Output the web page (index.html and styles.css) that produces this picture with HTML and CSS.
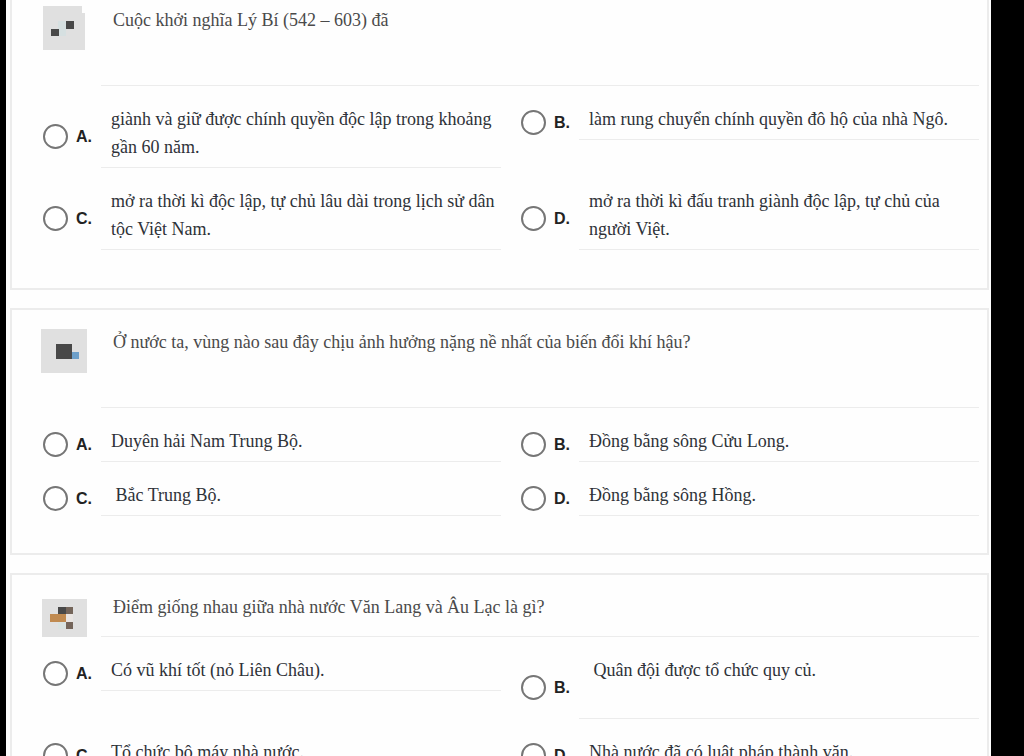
FILE: index.html
```html
<!DOCTYPE html>
<html lang="vi">

<head>
  <meta charset="UTF-8">
  <meta name="viewport" content="width=device-width, initial-scale=1.0">
  <title>Câu hỏi trắc nghiệm</title>
  <link rel="stylesheet" href="styles.css">
</head>

<body>
  <form class="quiz">
    <section class="card card-first">
      <div class="question">
        <div class="thumb">
          <svg width="42" height="44" viewBox="0 0 42 44" shape-rendering="crispEdges" aria-hidden="true">
            <path d="M0 0H39V7H42V44H0Z" fill="#e0e0e0"/>
            <path d="M15 23H23V30H15ZM15 15H23V23H15Z" fill="#d6e0e1"/>
            <path d="M8 23H16V30H8ZM23 15H31V23H23Z" fill="#484848"/>
          </svg>
        </div>
        <p class="question-text">Cuộc khởi nghĩa Lý Bí (542 – 603) đã</p>
      </div>
      <div class="answers">
        <label class="answer">
          <input type="radio" name="q1" value="A">
          <span class="letter">A.</span>
          <span class="answer-text">giành và giữ được chính quyền độc lập trong khoảng gần 60 năm.</span>
        </label>
        <label class="answer">
          <input type="radio" name="q1" value="B">
          <span class="letter">B.</span>
          <span class="answer-text">làm rung chuyển chính quyền đô hộ của nhà Ngô.</span>
        </label>
        <label class="answer">
          <input type="radio" name="q1" value="C">
          <span class="letter">C.</span>
          <span class="answer-text">mở ra thời kì độc lập, tự chủ lâu dài trong lịch sử dân tộc Việt Nam.</span>
        </label>
        <label class="answer">
          <input type="radio" name="q1" value="D">
          <span class="letter">D.</span>
          <span class="answer-text">mở ra thời kì đấu tranh giành độc lập, tự chủ của người Việt.</span>
        </label>
      </div>
    </section>

    <section class="card">
      <div class="question">
        <div class="thumb">
          <svg width="46" height="45" viewBox="0 0 46 45" shape-rendering="crispEdges" aria-hidden="true">
            <path d="M0 1H46V45H0Z" fill="#e0e0e0"/>
            <path d="M15 16H31V31H15Z" fill="#484848"/>
            <path d="M31 24H38V31H31Z" fill="#6d9fc9"/>
          </svg>
        </div>
        <p class="question-text">Ở nước ta, vùng nào sau đây chịu ảnh hưởng nặng nề nhất của biến đổi khí hậu?</p>
      </div>
      <div class="answers">
        <label class="answer">
          <input type="radio" name="q2" value="A">
          <span class="letter">A.</span>
          <span class="answer-text">Duyên hải Nam Trung Bộ.</span>
        </label>
        <label class="answer">
          <input type="radio" name="q2" value="B">
          <span class="letter">B.</span>
          <span class="answer-text">Đồng bằng sông Cửu Long.</span>
        </label>
        <label class="answer">
          <input type="radio" name="q2" value="C">
          <span class="letter">C.</span>
          <span class="answer-text">&nbsp;Bắc Trung Bộ.</span>
        </label>
        <label class="answer">
          <input type="radio" name="q2" value="D">
          <span class="letter">D.</span>
          <span class="answer-text">Đồng bằng sông Hồng.</span>
        </label>
      </div>
    </section>

    <section class="card">
      <div class="question question-short">
        <div class="thumb">
          <svg width="46" height="38" viewBox="0 0 46 38" shape-rendering="crispEdges" aria-hidden="true">
            <path d="M1 0H46V38H1Z" fill="#e0e0e0"/>
            <path d="M17 8H25V15H17Z" fill="#484848"/>
            <path d="M25 8H32V15H25ZM25 23H32V30H25Z" fill="#74655a"/>
            <path d="M9 15H25V23H9Z" fill="#c08a50"/>
            <path d="M25 15H32V23H25Z" fill="#e9e5e2"/>
            <path d="M17 23H25V30H17Z" fill="#d9e2e0"/>
          </svg>
        </div>
        <p class="question-text">Điểm giống nhau giữa nhà nước Văn Lang và Âu Lạc là gì?</p>
      </div>
      <div class="answers">
        <label class="answer">
          <input type="radio" name="q3" value="A">
          <span class="letter">A.</span>
          <span class="answer-text">Có vũ khí tốt (nỏ Liên Châu).</span>
        </label>
        <label class="answer">
          <input type="radio" name="q3" value="B">
          <span class="letter">B.</span>
          <span class="answer-text">&nbsp;Quân đội được tổ chức quy củ.<br>&nbsp;</span>
        </label>
        <label class="answer">
          <input type="radio" name="q3" value="C">
          <span class="letter">C.</span>
          <span class="answer-text">Tổ chức bộ máy nhà nước.</span>
        </label>
        <label class="answer">
          <input type="radio" name="q3" value="D">
          <span class="letter">D.</span>
          <span class="answer-text">Nhà nước đã có luật pháp thành văn.</span>
        </label>
      </div>
    </section>
  </form>
</body>

</html>
```
FILE: styles.css
```css
* {
  box-sizing: border-box;
}

body {
  margin: 0;
  height: 100vh;
  overflow: hidden;
  padding: 0 33px 0 6px;
  background-color: #000;
  font-family: "Liberation Serif", "Times New Roman", serif;
  font-size: 18px;
  line-height: 28px;
}

.quiz {
  height: 100%;
  overflow: hidden;
  padding: 0 2px 0 4px;
  background-color: #fefefe;
}

.card {
  margin-bottom: 18px;
  padding: 18px 8px 38px 29px;
  border: 2px solid #ececec;
}

.card + .card {
  padding-bottom: 37px;
}

.card-first {
  padding-top: 6px;
  border-top: none;
}

.question {
  display: flex;
  align-items: flex-start;
  gap: 14px;
  margin-bottom: 19px;
}

.thumb {
  display: flex;
  justify-content: center;
  width: 46px;
}

.question-text {
  flex: 1;
  min-height: 80px;
  margin: 0;
  padding-left: 12px;
  border-bottom: 1px solid #ececec;
  color: #4a4a4a;
}

.question-short {
  align-items: flex-end;
}

.question-short .question-text {
  min-height: 44px;
}

.answers {
  display: grid;
  grid-template-columns: 1fr 1fr;
  align-items: start;
  gap: 19px 20px;
  padding-left: 2px;
}

.answer {
  display: flex;
  align-items: center;
  cursor: pointer;
}

.answer input {
  appearance: none;
  width: 25px;
  height: 25px;
  margin: 0 8px 0 0;
  border: 2px solid #767676;
  border-radius: 50%;
  background-color: #fff;
}

.answer input:checked {
  background-color: #767676;
  box-shadow: inset 0 0 0 4px #fff;
}

.letter {
  width: 25px;
  color: #222;
  font-family: "Liberation Sans", Arial, sans-serif;
  font-size: 16px;
  font-weight: bold;
}

.answer-text {
  flex: 1;
  padding: 0 0 6px 10px;
  border-bottom: 1px solid #ececec;
  color: #2e3238;
}
```
